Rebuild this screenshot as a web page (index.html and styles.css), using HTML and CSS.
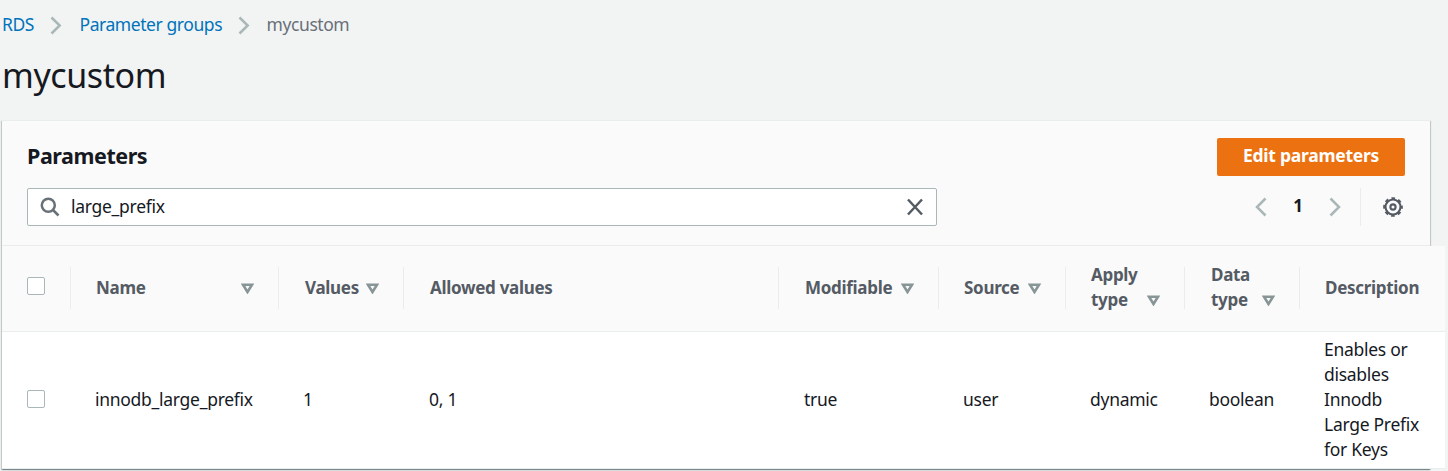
FILE: index.html
```html
<!DOCTYPE html>
<html lang="en">
<head>
<meta charset="utf-8">
<title>mycustom</title>
<link rel="stylesheet" href="styles.css">
</head>
<body>
<nav class="breadcrumbs">
  <a class="crumb" href="#">RDS</a>
  <svg class="crumb-arrow" width="12" height="19" viewBox="0 0 12 19"><path d="M1.5 1.5 9.7 9.5 1.5 17.5"/></svg>
  <a class="crumb" href="#">Parameter groups</a>
  <svg class="crumb-arrow" width="12" height="19" viewBox="0 0 12 19"><path d="M1.5 1.5 9.7 9.5 1.5 17.5"/></svg>
  <span class="crumb current">mycustom</span>
</nav>
<h1 class="title">mycustom</h1>
<main class="panel">
  <header class="panel-head">
    <div class="head-row">
      <h2 class="panel-title">Parameters</h2>
      <button class="primary">Edit parameters</button>
    </div>
    <div class="tools-row">
      <div class="search">
        <svg class="search-icon" width="20" height="20" viewBox="0 0 20 20"><circle cx="8.3" cy="8.3" r="6.5"/><path d="m13 13 5.5 5.5"/></svg>
        <span class="query">large_prefix</span>
        <svg class="clear-icon" width="16" height="18" viewBox="0 0 16 18"><path d="m1 1.500 14 15M15 1.500l-14 15"/></svg>
      </div>
      <div class="pager">
        <svg class="page-arrow" width="12" height="20" viewBox="0 0 12 20"><path d="M10.500 1.500 2 10l8.500 8.500"/></svg>
        <b class="page">1</b>
        <svg class="page-arrow" width="12" height="20" viewBox="0 0 12 20"><path d="M1.500 1.500 10 10l-8.500 8.500"/></svg>
        <span class="divider"></span>
        <svg class="gear" width="20" height="20" viewBox="0 0 20 20"><circle cx="10" cy="10" r="7.500"/><circle class="teeth" cx="10" cy="10" r="8.800"/><circle cx="10" cy="10" r="2.600"/></svg>
      </div>
    </div>
  </header>
  <section class="grid">
    <div class="row labels">
      <div class="cell"><span class="box"></span></div>
      <div class="cell"><span>Name</span><svg class="sort" width="13" height="11" viewBox="0 0 13 11"><path d="M2 1.700h9L6.500 9z"/></svg></div>
      <div class="cell"><span>Values</span><svg class="sort" width="13" height="11" viewBox="0 0 13 11"><path d="M2 1.700h9L6.500 9z"/></svg></div>
      <div class="cell"><span>Allowed values</span></div>
      <div class="cell"><span>Modifiable</span><svg class="sort" width="13" height="11" viewBox="0 0 13 11"><path d="M2 1.700h9L6.500 9z"/></svg></div>
      <div class="cell"><span>Source</span><svg class="sort" width="13" height="11" viewBox="0 0 13 11"><path d="M2 1.700h9L6.500 9z"/></svg></div>
      <div class="cell"><span>Apply<br>type</span><svg class="sort low" width="13" height="11" viewBox="0 0 13 11"><path d="M2 1.700h9L6.500 9z"/></svg></div>
      <div class="cell"><span>Data<br>type</span><svg class="sort low" width="13" height="11" viewBox="0 0 13 11"><path d="M2 1.700h9L6.500 9z"/></svg></div>
      <div class="cell"><span>Description</span></div>
    </div>
    <div class="row values">
      <div class="cell"><span class="box"></span></div>
      <div class="cell">innodb_large_prefix</div>
      <div class="cell">1</div>
      <div class="cell">0, 1</div>
      <div class="cell">true</div>
      <div class="cell">user</div>
      <div class="cell">dynamic</div>
      <div class="cell">boolean</div>
      <div class="cell">Enables or<br>disables<br>Innodb<br>Large Prefix<br>for Keys</div>
    </div>
  </section>
</main>
</body>
</html>
```
FILE: styles.css
```css
* { box-sizing: border-box; }
body {
  margin: 0;
  height: 471px;
  overflow: hidden;
  background: #f2f3f3;
  color: #16191f;
  font: 17.500px/25px "Noto Sans", "Open Sans", sans-serif;
  letter-spacing: -.28px;
}
svg { display: block; flex: none; fill: none; }
.breadcrumbs { display: flex; align-items: center; height: 50px; padding: 0 0 1px 2px; letter-spacing: -.43px; }
.crumb { color: #0073bb; text-decoration: none; }
.crumb.current { color: #687078; }
.crumb-arrow { margin: 2px 17px 0 16.500px; stroke: #aab7b8; stroke-width: 2.500; }
.crumb-arrow ~ .crumb-arrow { margin-left: 15.500px; margin-right: 17px; }
.title { margin: 2px 0 0 2px; height: 68px; font-size: 34px; line-height: 47px; font-weight: 400; letter-spacing: -.4px; }
.panel {
  margin-left: 2px;
  width: 1428px;
  height: 349px;
  background: #fff;
  border-top: 1px solid #eaeded;
  box-shadow: 0 1px 1px rgba(0,28,36,.3), 1px 1px 1px rgba(0,28,36,.15), -1px 1px 1px rgba(0,28,36,.15);
}
.panel-head { height: 125px; padding: 17px 25px 0; background: #fafafa; border-bottom: 1px solid #eaeded; }
.head-row, .tools-row { display: flex; justify-content: space-between; }
.head-row { height: 50px; }
.panel-title { margin: 0; font-size: 21.500px; line-height: 35px; font-weight: 700; letter-spacing: -.45px; }
.primary {
  width: 188px;
  height: 38px;
  padding: 0 0 3px;
  border: 0;
  border-radius: 2px;
  background: #ec7211;
  color: #fff;
  font: 700 17.500px/25px "Noto Sans", "Open Sans", sans-serif;
  letter-spacing: -.25px;
}
.search {
  display: flex;
  align-items: center;
  width: 910px;
  height: 38px;
  padding: 0 13px 0 12px;
  background: #fff;
  border: 1px solid #aab7b8;
  border-radius: 2px;
}
.search-icon { stroke: #687078; stroke-width: 2.500; }
.query { margin-left: 11px; padding-bottom: 1px; }
.clear-icon { margin-left: auto; stroke: #545b64; stroke-width: 2.500; }
.pager { display: flex; align-items: center; height: 38px; padding-right: 2px; }
.page-arrow { stroke: #aab7b8; stroke-width: 2.500; }
.page { width: 62px; padding-bottom: 3px; text-align: center; font-size: 17px; font-weight: 700; }
.divider { width: 1px; height: 38px; margin: 0 22px 0 19px; background: #eaeded; }
.gear { stroke: #545b64; stroke-width: 2.100; }
.teeth { stroke-dasharray: 3.600 3.311; stroke-dashoffset: 1.800; }
.grid { width: 1443px; }
.row { display: grid; grid-template-columns: 68px 208px 125px 375px 160px 127px 119px 115px 146px; }
.labels {
  height: 86px;
  padding-top: 21px;
  background: #fafafa;
  border-bottom: 1px solid #eaeded;
  color: #545b64;
  font-size: 17px;
  font-weight: 700;
  letter-spacing: -.3px;
}
.labels .cell { display: flex; align-items: center; height: 42px; padding-left: 25px; padding-right: 24px; border-left: 1px solid #eaeded; }
.labels .cell > span:not(.box) { padding-bottom: 2px; }
.labels .cell:first-child { border-left: 0; padding-bottom: 4px; }
.labels .cell:nth-child(n+3):nth-child(-n+5) { padding-left: 26px; }
.labels .cell:nth-child(8) { padding-left: 26px; }
.sort { margin-left: auto; stroke: #879596; stroke-width: 2.600; }
.sort.low { align-self: flex-end; margin-bottom: 3px; }
.values { height: 137px; align-items: center; background: #fff; border-bottom: 1px solid #eaeded; }
.values .cell { padding: 0 0 1px 25px; }
.values .cell:first-child { padding-bottom: 2px; }
.values .cell:nth-child(4), .values .cell:nth-child(5) { padding-left: 26px; }
.box { display: block; width: 18px; height: 18px; border: 1px solid #aab7b8; border-radius: 2px; background: #fff; }
```
